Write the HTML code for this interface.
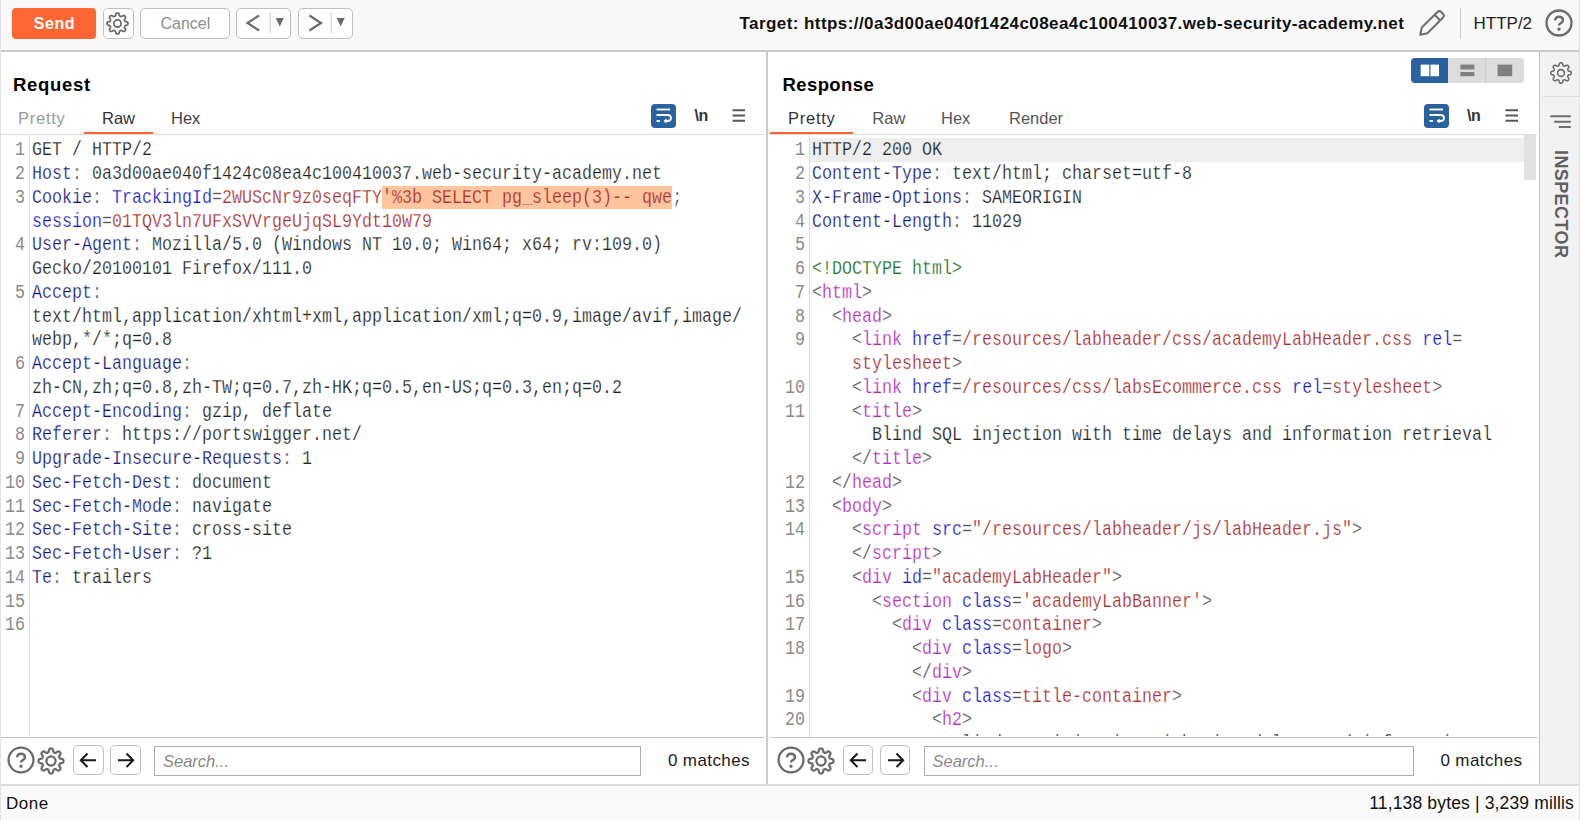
<!DOCTYPE html>
<html><head><meta charset="utf-8"><style>
*{margin:0;padding:0;box-sizing:border-box}
html,body{width:1580px;height:820px;overflow:hidden;background:#fff;font-family:"Liberation Sans",sans-serif;color:#1a1a1a}
.abs{position:absolute}
.code{font-family:"Liberation Mono",monospace;font-size:20px;line-height:23.75px;white-space:pre;transform-origin:0 0;transform:scaleX(0.8333);color:#222;-webkit-text-stroke:0.25px #fff}
.ln{font-family:"Liberation Mono",monospace;font-size:20px;line-height:23.75px;white-space:pre;color:#8a8a8a;text-align:right;transform-origin:100% 0;transform:scaleX(0.8333)}
.k{color:#16167e}
.a{color:#1515c8}
.v{color:#a82c2c}
.g{color:#555555}
.t{color:#b428c0}
.dt{color:#1a6e1a}
.hl{background:#ffc59f;-webkit-text-stroke:0.25px #ffc59f}
.l1{-webkit-text-stroke:0.25px #eeeeee}
</style></head><body>
<div class="abs" style="left:0px;top:0px;width:1580px;height:50px;background:#f9f9f9;"></div>
<div class="abs" style="left:0px;top:50px;width:1580px;height:2px;background:#cdc9c9;"></div>
<div class="abs" style="left:0px;top:784px;width:1580px;height:2px;background:#dcdcdc;"></div>
<div class="abs" style="left:0px;top:786px;width:1580px;height:34px;background:#fafafa;"></div>
<div class="abs" style="left:766px;top:52px;width:2px;height:732px;background:#cdc9c9;"></div>
<div class="abs" style="left:1540px;top:52px;width:39px;height:732px;background:#f3f2f2;"></div>
<div class="abs" style="left:1539px;top:52px;width:1px;height:732px;background:#c6c2c2;"></div>
<div class="abs" style="left:12px;top:8px;width:84px;height:31px;background:#ff6633;border-radius:4px"></div>
<div class="abs" style="left:33.8px;top:15.76px;font-size:16px;line-height:16px;color:#fff;font-weight:bold;font-style:normal;white-space:pre;letter-spacing:0.55px">Send</div>
<div class="abs" style="left:103px;top:8px;width:31px;height:31px;border:1px solid #c2bebe;border-radius:5px;background:#fff;"></div>
<svg class="abs" style="left:102.3px;top:7.55px" width="31" height="31" viewBox="0 0 31 31"><path d="M15.50,5.05 L15.77,5.06 L16.05,5.09 L16.31,5.16 L16.57,5.28 L16.82,5.48 L17.03,5.82 L17.20,6.32 L17.33,6.88 L17.45,7.38 L17.58,7.73 L17.74,7.95 L17.90,8.10 L18.08,8.21 L18.26,8.31 L18.45,8.39 L18.63,8.46 L18.83,8.52 L19.03,8.57 L19.26,8.58 L19.52,8.53 L19.86,8.38 L20.30,8.11 L20.79,7.80 L21.26,7.57 L21.65,7.48 L21.97,7.51 L22.24,7.61 L22.47,7.76 L22.69,7.92 L22.89,8.11 L23.08,8.31 L23.24,8.53 L23.39,8.76 L23.49,9.03 L23.52,9.35 L23.43,9.74 L23.20,10.21 L22.89,10.70 L22.62,11.14 L22.47,11.48 L22.42,11.74 L22.43,11.97 L22.48,12.17 L22.54,12.37 L22.61,12.55 L22.69,12.74 L22.79,12.92 L22.90,13.10 L23.05,13.26 L23.27,13.42 L23.62,13.55 L24.12,13.67 L24.68,13.80 L25.18,13.97 L25.52,14.18 L25.72,14.43 L25.84,14.69 L25.91,14.95 L25.94,15.23 L25.95,15.50 L25.94,15.77 L25.91,16.05 L25.84,16.31 L25.72,16.57 L25.52,16.82 L25.18,17.03 L24.68,17.20 L24.12,17.33 L23.62,17.45 L23.27,17.58 L23.05,17.74 L22.90,17.90 L22.79,18.08 L22.69,18.26 L22.61,18.45 L22.54,18.63 L22.48,18.83 L22.43,19.03 L22.42,19.26 L22.47,19.52 L22.62,19.86 L22.89,20.30 L23.20,20.79 L23.43,21.26 L23.52,21.65 L23.49,21.97 L23.39,22.24 L23.24,22.47 L23.08,22.69 L22.89,22.89 L22.69,23.08 L22.47,23.24 L22.24,23.39 L21.97,23.49 L21.65,23.52 L21.26,23.43 L20.79,23.20 L20.30,22.89 L19.86,22.62 L19.52,22.47 L19.26,22.42 L19.03,22.43 L18.83,22.48 L18.63,22.54 L18.45,22.61 L18.26,22.69 L18.08,22.79 L17.90,22.90 L17.74,23.05 L17.58,23.27 L17.45,23.62 L17.33,24.12 L17.20,24.68 L17.03,25.18 L16.82,25.52 L16.57,25.72 L16.31,25.84 L16.05,25.91 L15.77,25.94 L15.50,25.95 L15.23,25.94 L14.95,25.91 L14.69,25.84 L14.43,25.72 L14.18,25.52 L13.97,25.18 L13.80,24.68 L13.67,24.12 L13.55,23.62 L13.42,23.27 L13.26,23.05 L13.10,22.90 L12.92,22.79 L12.74,22.69 L12.55,22.61 L12.37,22.54 L12.17,22.48 L11.97,22.43 L11.74,22.42 L11.48,22.47 L11.14,22.62 L10.70,22.89 L10.21,23.20 L9.74,23.43 L9.35,23.52 L9.03,23.49 L8.76,23.39 L8.53,23.24 L8.31,23.08 L8.11,22.89 L7.92,22.69 L7.76,22.47 L7.61,22.24 L7.51,21.97 L7.48,21.65 L7.57,21.26 L7.80,20.79 L8.11,20.30 L8.38,19.86 L8.53,19.52 L8.58,19.26 L8.57,19.03 L8.52,18.83 L8.46,18.63 L8.39,18.45 L8.31,18.26 L8.21,18.08 L8.10,17.90 L7.95,17.74 L7.73,17.58 L7.38,17.45 L6.88,17.33 L6.32,17.20 L5.82,17.03 L5.48,16.82 L5.28,16.57 L5.16,16.31 L5.09,16.05 L5.06,15.77 L5.05,15.50 L5.06,15.23 L5.09,14.95 L5.16,14.69 L5.28,14.43 L5.48,14.18 L5.82,13.97 L6.32,13.80 L6.88,13.67 L7.38,13.55 L7.73,13.42 L7.95,13.26 L8.10,13.10 L8.21,12.92 L8.31,12.74 L8.39,12.55 L8.46,12.37 L8.52,12.17 L8.57,11.97 L8.58,11.74 L8.53,11.48 L8.38,11.14 L8.11,10.70 L7.80,10.21 L7.57,9.74 L7.48,9.35 L7.51,9.03 L7.61,8.76 L7.76,8.53 L7.92,8.31 L8.11,8.11 L8.31,7.92 L8.53,7.76 L8.76,7.61 L9.03,7.51 L9.35,7.48 L9.74,7.57 L10.21,7.80 L10.70,8.11 L11.14,8.38 L11.48,8.53 L11.74,8.58 L11.97,8.57 L12.17,8.52 L12.37,8.46 L12.55,8.39 L12.74,8.31 L12.92,8.21 L13.10,8.10 L13.26,7.95 L13.42,7.73 L13.55,7.38 L13.67,6.88 L13.80,6.32 L13.97,5.82 L14.18,5.48 L14.43,5.28 L14.69,5.16 L14.95,5.09 L15.23,5.06Z" fill="none" stroke="#666" stroke-width="1.7" stroke-linejoin="round"/><circle cx="15.5" cy="15.5" r="3.6" fill="none" stroke="#666" stroke-width="1.7"/></svg>
<div class="abs" style="left:140px;top:8px;width:90px;height:31px;border:1px solid #c2bebe;border-radius:5px;background:#fff;"></div>
<div class="abs" style="left:160.5px;top:16.06px;font-size:16px;line-height:16px;color:#8e8e8e;font-weight:normal;font-style:normal;white-space:pre;">Cancel</div>
<div class="abs" style="left:236px;top:8px;width:55px;height:31px;border:1px solid #c2bebe;border-radius:5px;background:#fff;"></div>
<div class="abs" style="left:298px;top:8px;width:55px;height:31px;border:1px solid #c2bebe;border-radius:5px;background:#fff;"></div>
<svg class="abs" style="left:236px;top:8px" width="55" height="31" viewBox="0 0 55 31"><path d="M23,7.5 L11.5,15 L23,22.5" fill="none" stroke="#6a6a6a" stroke-width="2.2"/><rect x="33.6" y="5" width="1.4" height="20" fill="#d6d6d6"/><path d="M39.8,10 L47.8,10 L43.8,18.5Z" fill="#6a6a6a"/></svg>
<svg class="abs" style="left:298px;top:8px" width="55" height="31" viewBox="0 0 55 31"><path d="M11.5,7.5 L23,15 L11.5,22.5" fill="none" stroke="#6a6a6a" stroke-width="2.2"/><rect x="32.5" y="5" width="1.4" height="20" fill="#d6d6d6"/><path d="M38.7,10 L46.7,10 L42.7,18.5Z" fill="#6a6a6a"/></svg>
<div class="abs" style="left:739.5px;top:14.61px;font-size:17px;line-height:17px;color:#111;font-weight:bold;font-style:normal;white-space:pre;letter-spacing:0.43px">Target: https://0a3d00ae040f1424c08ea4c100410037.web-security-academy.net</div>
<svg class="abs" style="left:1419px;top:9px" width="27" height="27" viewBox="0 0 27 27"><path d="M1.2,25.8 L2.8,18.6 L18.2,3.2 Q20.4,1 22.6,3.2 L23.8,4.4 Q26,6.6 23.8,8.8 L8.4,24.2 Z M15.6,5.8 L21.2,11.4" fill="none" stroke="#6e6e6e" stroke-width="2.1" stroke-linejoin="round"/></svg>
<div class="abs" style="left:1460px;top:8px;width:1px;height:31px;background:#cfcfcf;"></div>
<div class="abs" style="left:1473.5px;top:14.61px;font-size:17px;line-height:17px;color:#222;font-weight:normal;font-style:normal;white-space:pre;">HTTP/2</div>
<svg class="abs" style="left:1544.8px;top:8.7px" width="28" height="28" viewBox="0 0 28 28"><circle cx="14.0" cy="14.0" r="12.5" fill="none" stroke="#6b6b6b" stroke-width="2.3"/><path d="M10.10,11.40 Q10.40,7.70 14.00,7.70 Q17.90,7.70 17.90,11.00 Q17.90,13.40 15.00,14.60 Q14.00,15.00 14.00,16.60" fill="none" stroke="#6b6b6b" stroke-width="2.4"/><rect x="12.5" y="18.8" width="3" height="3" rx="0.8" fill="#6b6b6b"/></svg>
<div class="abs" style="left:13px;top:75.94px;font-size:18.5px;line-height:18.5px;color:#000;font-weight:bold;font-style:normal;white-space:pre;letter-spacing:0.7px">Request</div>
<div class="abs" style="left:18px;top:110.33px;font-size:16.5px;line-height:16.5px;color:#9a9a9a;font-weight:normal;font-style:normal;white-space:pre;letter-spacing:0.75px">Pretty</div>
<div class="abs" style="left:102px;top:110.33px;font-size:16.5px;line-height:16.5px;color:#333;font-weight:normal;font-style:normal;white-space:pre;">Raw</div>
<div class="abs" style="left:171px;top:110.33px;font-size:16.5px;line-height:16.5px;color:#444;font-weight:normal;font-style:normal;white-space:pre;">Hex</div>
<div class="abs" style="left:83.6px;top:131.5px;width:69px;height:2.5px;background:#ff6633;"></div>
<div class="abs" style="left:1px;top:134px;width:763px;height:1px;background:#dcdcdc;"></div>
<div class="abs" style="left:782.5px;top:75.94px;font-size:18.5px;line-height:18.5px;color:#000;font-weight:bold;font-style:normal;white-space:pre;letter-spacing:0.4px">Response</div>
<div class="abs" style="left:788px;top:110.33px;font-size:16.5px;line-height:16.5px;color:#333;font-weight:normal;font-style:normal;white-space:pre;letter-spacing:0.75px">Pretty</div>
<div class="abs" style="left:872.3px;top:110.33px;font-size:16.5px;line-height:16.5px;color:#555;font-weight:normal;font-style:normal;white-space:pre;">Raw</div>
<div class="abs" style="left:941px;top:110.33px;font-size:16.5px;line-height:16.5px;color:#555;font-weight:normal;font-style:normal;white-space:pre;">Hex</div>
<div class="abs" style="left:1009px;top:110.33px;font-size:16.5px;line-height:16.5px;color:#555;font-weight:normal;font-style:normal;white-space:pre;">Render</div>
<div class="abs" style="left:770px;top:131.5px;width:83px;height:2.5px;background:#ff6633;"></div>
<div class="abs" style="left:770px;top:134px;width:767px;height:1px;background:#dcdcdc;"></div>
<svg class="abs" style="left:651px;top:104px" width="25" height="24" viewBox="0 0 25 24"><rect x="0" y="0" width="25" height="24" rx="4" fill="#2a62a0"/><path d="M5.5,5.5 H19" stroke="#fff" stroke-width="1.8"/><path d="M5.5,11 H16.5 Q20,11 20,14 Q20,17 16.5,17 H14" fill="none" stroke="#fff" stroke-width="1.8"/><path d="M5.5,17 H9" stroke="#fff" stroke-width="1.8"/><path d="M15.5,14.5 L12.5,17 L15.5,19.5Z" fill="#fff"/></svg>
<div class="abs" style="left:694.5px;top:107.96px;font-size:16px;line-height:16px;color:#333;font-weight:bold;font-style:normal;white-space:pre;letter-spacing:-0.5px">\n</div>
<svg class="abs" style="left:732px;top:109px" width="14" height="13" viewBox="0 0 14 13"><path d="M0.5,1.3 H13 M0.5,6.5 H13 M0.5,11.7 H13" stroke="#585858" stroke-width="2"/></svg>
<svg class="abs" style="left:1424px;top:104px" width="25" height="24" viewBox="0 0 25 24"><rect x="0" y="0" width="25" height="24" rx="4" fill="#2a62a0"/><path d="M5.5,5.5 H19" stroke="#fff" stroke-width="1.8"/><path d="M5.5,11 H16.5 Q20,11 20,14 Q20,17 16.5,17 H14" fill="none" stroke="#fff" stroke-width="1.8"/><path d="M5.5,17 H9" stroke="#fff" stroke-width="1.8"/><path d="M15.5,14.5 L12.5,17 L15.5,19.5Z" fill="#fff"/></svg>
<div class="abs" style="left:1467px;top:107.96px;font-size:16px;line-height:16px;color:#333;font-weight:bold;font-style:normal;white-space:pre;letter-spacing:-0.5px">\n</div>
<svg class="abs" style="left:1505px;top:109px" width="14" height="13" viewBox="0 0 14 13"><path d="M0.5,1.3 H13 M0.5,6.5 H13 M0.5,11.7 H13" stroke="#585858" stroke-width="2"/></svg>
<svg class="abs" style="left:1411px;top:58px" width="113" height="25" viewBox="0 0 113 25"><path d="M4,0 H37 V25 H4 Q0,25 0,21 V4 Q0,0 4,0Z" fill="#2a62a0"/><path d="M37,0 H109 Q113,0 113,4 V21 Q113,25 109,25 H37Z" fill="#dcdcdc"/><rect x="74" y="0" width="0.8" height="25" fill="#c8c8c8"/><rect x="9.7" y="6.6" width="8.6" height="11.6" fill="#fff"/><rect x="19.5" y="6.6" width="8.5" height="11.6" fill="#fff"/><rect x="49.4" y="6.6" width="14" height="4.9" fill="#808080"/><rect x="49.4" y="14" width="14" height="4.2" fill="#808080"/><rect x="86.6" y="6.6" width="14.6" height="11.6" fill="#808080"/></svg>
<svg class="abs" style="left:1548.5px;top:61.3px" width="24" height="24" viewBox="0 0 24 24"><path d="M12.00,1.80 L12.27,1.81 L12.53,1.84 L12.79,1.91 L13.05,2.02 L13.29,2.22 L13.50,2.56 L13.66,3.04 L13.79,3.60 L13.90,4.08 L14.03,4.43 L14.18,4.65 L14.34,4.80 L14.51,4.90 L14.69,4.99 L14.87,5.07 L15.05,5.14 L15.24,5.20 L15.44,5.25 L15.66,5.26 L15.92,5.21 L16.25,5.06 L16.68,4.80 L17.16,4.49 L17.62,4.27 L18.00,4.18 L18.31,4.20 L18.58,4.30 L18.81,4.44 L19.02,4.61 L19.21,4.79 L19.39,4.98 L19.56,5.19 L19.70,5.42 L19.80,5.69 L19.82,6.00 L19.73,6.38 L19.51,6.84 L19.20,7.32 L18.94,7.75 L18.79,8.08 L18.74,8.34 L18.75,8.56 L18.80,8.76 L18.86,8.95 L18.93,9.13 L19.01,9.31 L19.10,9.49 L19.20,9.66 L19.35,9.82 L19.57,9.97 L19.92,10.10 L20.40,10.21 L20.96,10.34 L21.44,10.50 L21.78,10.71 L21.98,10.95 L22.09,11.21 L22.16,11.47 L22.19,11.73 L22.20,12.00 L22.19,12.27 L22.16,12.53 L22.09,12.79 L21.98,13.05 L21.78,13.29 L21.44,13.50 L20.96,13.66 L20.40,13.79 L19.92,13.90 L19.57,14.03 L19.35,14.18 L19.20,14.34 L19.10,14.51 L19.01,14.69 L18.93,14.87 L18.86,15.05 L18.80,15.24 L18.75,15.44 L18.74,15.66 L18.79,15.92 L18.94,16.25 L19.20,16.68 L19.51,17.16 L19.73,17.62 L19.82,18.00 L19.80,18.31 L19.70,18.58 L19.56,18.81 L19.39,19.02 L19.21,19.21 L19.02,19.39 L18.81,19.56 L18.58,19.70 L18.31,19.80 L18.00,19.82 L17.62,19.73 L17.16,19.51 L16.68,19.20 L16.25,18.94 L15.92,18.79 L15.66,18.74 L15.44,18.75 L15.24,18.80 L15.05,18.86 L14.87,18.93 L14.69,19.01 L14.51,19.10 L14.34,19.20 L14.18,19.35 L14.03,19.57 L13.90,19.92 L13.79,20.40 L13.66,20.96 L13.50,21.44 L13.29,21.78 L13.05,21.98 L12.79,22.09 L12.53,22.16 L12.27,22.19 L12.00,22.20 L11.73,22.19 L11.47,22.16 L11.21,22.09 L10.95,21.98 L10.71,21.78 L10.50,21.44 L10.34,20.96 L10.21,20.40 L10.10,19.92 L9.97,19.57 L9.82,19.35 L9.66,19.20 L9.49,19.10 L9.31,19.01 L9.13,18.93 L8.95,18.86 L8.76,18.80 L8.56,18.75 L8.34,18.74 L8.08,18.79 L7.75,18.94 L7.32,19.20 L6.84,19.51 L6.38,19.73 L6.00,19.82 L5.69,19.80 L5.42,19.70 L5.19,19.56 L4.98,19.39 L4.79,19.21 L4.61,19.02 L4.44,18.81 L4.30,18.58 L4.20,18.31 L4.18,18.00 L4.27,17.62 L4.49,17.16 L4.80,16.68 L5.06,16.25 L5.21,15.92 L5.26,15.66 L5.25,15.44 L5.20,15.24 L5.14,15.05 L5.07,14.87 L4.99,14.69 L4.90,14.51 L4.80,14.34 L4.65,14.18 L4.43,14.03 L4.08,13.90 L3.60,13.79 L3.04,13.66 L2.56,13.50 L2.22,13.29 L2.02,13.05 L1.91,12.79 L1.84,12.53 L1.81,12.27 L1.80,12.00 L1.81,11.73 L1.84,11.47 L1.91,11.21 L2.02,10.95 L2.22,10.71 L2.56,10.50 L3.04,10.34 L3.60,10.21 L4.08,10.10 L4.43,9.97 L4.65,9.82 L4.80,9.66 L4.90,9.49 L4.99,9.31 L5.07,9.13 L5.14,8.95 L5.20,8.76 L5.25,8.56 L5.26,8.34 L5.21,8.08 L5.06,7.75 L4.80,7.32 L4.49,6.84 L4.27,6.38 L4.18,6.00 L4.20,5.69 L4.30,5.42 L4.44,5.19 L4.61,4.98 L4.79,4.79 L4.98,4.61 L5.19,4.44 L5.42,4.30 L5.69,4.20 L6.00,4.18 L6.38,4.27 L6.84,4.49 L7.32,4.80 L7.75,5.06 L8.08,5.21 L8.34,5.26 L8.56,5.25 L8.76,5.20 L8.95,5.14 L9.13,5.07 L9.31,4.99 L9.49,4.90 L9.66,4.80 L9.82,4.65 L9.97,4.43 L10.10,4.08 L10.21,3.60 L10.34,3.04 L10.50,2.56 L10.71,2.22 L10.95,2.02 L11.21,1.91 L11.47,1.84 L11.73,1.81Z" fill="none" stroke="#6e6e6e" stroke-width="1.6" stroke-linejoin="round"/><circle cx="12.0" cy="12.0" r="3.4" fill="none" stroke="#6e6e6e" stroke-width="1.6"/></svg>
<div class="abs" style="left:1543px;top:96px;width:36px;height:1px;background:#dcdcdc;"></div>
<svg class="abs" style="left:1550px;top:114px" width="22" height="15" viewBox="0 0 22 15"><path d="M1,2.3 H20 M5,7.8 H20 M9.5,13 H20" stroke="#6e6e6e" stroke-width="2" stroke-linecap="round"/></svg>
<div class="abs" style="left:1553px;top:150px;width:107px;height:15px;transform-origin:0 0;transform:translate(15px,0) rotate(90deg);font-weight:bold;font-size:18px;line-height:15px;color:#606060;letter-spacing:0.4px;white-space:pre">INSPECTOR</div>
<div class="abs" style="left:810px;top:138px;width:714px;height:23.5px;background:#eeeeee;"></div>
<div class="abs" style="left:1524px;top:135px;width:12px;height:45px;background:#e2e2e2;"></div>
<div class="abs" style="left:29px;top:135px;width:1px;height:602px;background:#dcdcdc;"></div>
<div class="abs" style="left:809px;top:135px;width:1px;height:602px;background:#dcdcdc;"></div>
<div class="abs code" style="left:32px;top:138.4px">GET / HTTP/2
<span class="k">Host</span><span class="g">:</span> 0a3d00ae040f1424c08ea4c100410037.web-security-academy.net
<span class="k">Cookie</span><span class="g">:</span> <span class="a">TrackingId</span><span class="g">=</span><span class="v">2WUScNr9z0seqFTY</span><span class="hl"><span class="v">&#x27;%3b SELECT pg_sleep(3)-- qwe</span></span><span class="g">;</span>
<span class="a">session</span><span class="g">=</span><span class="v">01TQV3ln7UFxSVVrgeUjqSL9Ydt10W79</span>
<span class="k">User-Agent</span><span class="g">:</span> Mozilla/5.0 (Windows NT 10.0; Win64; x64; rv:109.0)
Gecko/20100101 Firefox/111.0
<span class="k">Accept</span><span class="g">:</span>
text/html,application/xhtml+xml,application/xml;q=0.9,image/avif,image/
webp,*/*;q=0.8
<span class="k">Accept-Language</span><span class="g">:</span>
zh-CN,zh;q=0.8,zh-TW;q=0.7,zh-HK;q=0.5,en-US;q=0.3,en;q=0.2
<span class="k">Accept-Encoding</span><span class="g">:</span> gzip, deflate
<span class="k">Referer</span><span class="g">:</span> https://portswigger.net/
<span class="k">Upgrade-Insecure-Requests</span><span class="g">:</span> 1
<span class="k">Sec-Fetch-Dest</span><span class="g">:</span> document
<span class="k">Sec-Fetch-Mode</span><span class="g">:</span> navigate
<span class="k">Sec-Fetch-Site</span><span class="g">:</span> cross-site
<span class="k">Sec-Fetch-User</span><span class="g">:</span> ?1
<span class="k">Te</span><span class="g">:</span> trailers

</div>
<div class="abs ln" style="left:-35px;top:138.4px;width:60px">1
2
3

4

5


6

7
8
9
10
11
12
13
14
15
16</div>
<div class="abs" style="left:809px;top:135px;width:715px;height:601px;overflow:hidden">
<div class="abs code" style="left:3.3999999999999773px;top:3.4000000000000057px"><span class="l1">HTTP/2 200 OK</span>
<span class="k">Content-Type</span><span class="g">:</span> text/html; charset=utf-8
<span class="k">X-Frame-Options</span><span class="g">:</span> SAMEORIGIN
<span class="k">Content-Length</span><span class="g">:</span> 11029

<span class="dt">&lt;!DOCTYPE html&gt;</span>
<span class="g">&lt;</span><span class="t">html</span><span class="g">&gt;</span>
  <span class="g">&lt;</span><span class="t">head</span><span class="g">&gt;</span>
    <span class="g">&lt;</span><span class="t">link</span> <span class="a">href</span><span class="g">=</span><span class="v">/resources/labheader/css/academyLabHeader.css</span> <span class="a">rel</span><span class="g">=</span>
    <span class="v">stylesheet</span><span class="g">&gt;</span>
    <span class="g">&lt;</span><span class="t">link</span> <span class="a">href</span><span class="g">=</span><span class="v">/resources/css/labsEcommerce.css</span> <span class="a">rel</span><span class="g">=</span><span class="v">stylesheet</span><span class="g">&gt;</span>
    <span class="g">&lt;</span><span class="t">title</span><span class="g">&gt;</span>
      Blind SQL injection with time delays and information retrieval
    <span class="g">&lt;/</span><span class="t">title</span><span class="g">&gt;</span>
  <span class="g">&lt;/</span><span class="t">head</span><span class="g">&gt;</span>
  <span class="g">&lt;</span><span class="t">body</span><span class="g">&gt;</span>
    <span class="g">&lt;</span><span class="t">script</span> <span class="a">src</span><span class="g">=</span><span class="v">&quot;/resources/labheader/js/labHeader.js&quot;</span><span class="g">&gt;</span>
    <span class="g">&lt;/</span><span class="t">script</span><span class="g">&gt;</span>
    <span class="g">&lt;</span><span class="t">div</span> <span class="a">id</span><span class="g">=</span><span class="v">&quot;academyLabHeader&quot;</span><span class="g">&gt;</span>
      <span class="g">&lt;</span><span class="t">section</span> <span class="a">class</span><span class="g">=</span><span class="v">&#x27;academyLabBanner&#x27;</span><span class="g">&gt;</span>
        <span class="g">&lt;</span><span class="t">div</span> <span class="a">class</span><span class="g">=</span><span class="v">container</span><span class="g">&gt;</span>
          <span class="g">&lt;</span><span class="t">div</span> <span class="a">class</span><span class="g">=</span><span class="v">logo</span><span class="g">&gt;</span>
          <span class="g">&lt;/</span><span class="t">div</span><span class="g">&gt;</span>
          <span class="g">&lt;</span><span class="t">div</span> <span class="a">class</span><span class="g">=</span><span class="v">title-container</span><span class="g">&gt;</span>
            <span class="g">&lt;</span><span class="t">h2</span><span class="g">&gt;</span>
              Blind SQL injection with time delays and information retrieval</div>
</div>
<div class="abs" style="left:768px;top:135px;width:40px;height:602px;overflow:hidden">
<div class="abs ln" style="left:-23px;top:3.4000000000000057px;width:60px">1
2
3
4
5
6
7
8
9

10
11


12
13
14

15
16
17
18

19
20
</div>
</div>
<div class="abs" style="left:1px;top:737px;width:763px;height:1px;background:#c4c0c0;"></div>
<div class="abs" style="left:770px;top:737px;width:767px;height:1px;background:#c4c0c0;"></div>
<svg class="abs" style="left:7.25px;top:746.35px" width="28" height="28" viewBox="0 0 28 28"><circle cx="14.0" cy="14.0" r="12.45" fill="none" stroke="#6b6b6b" stroke-width="2.3"/><path d="M10.10,11.40 Q10.40,7.70 14.00,7.70 Q17.90,7.70 17.90,11.00 Q17.90,13.40 15.00,14.60 Q14.00,15.00 14.00,16.60" fill="none" stroke="#6b6b6b" stroke-width="2.4"/><rect x="12.5" y="18.8" width="3" height="3" rx="0.8" fill="#6b6b6b"/></svg>
<svg class="abs" style="left:36px;top:745.5px" width="30" height="30" viewBox="0 0 30 30"><path d="M15.00,2.50 L15.33,2.51 L15.65,2.55 L15.97,2.64 L16.28,2.78 L16.57,3.04 L16.83,3.48 L17.02,4.10 L17.17,4.81 L17.30,5.44 L17.44,5.88 L17.62,6.16 L17.81,6.35 L18.02,6.48 L18.23,6.59 L18.44,6.69 L18.66,6.77 L18.89,6.84 L19.13,6.89 L19.40,6.90 L19.72,6.82 L20.14,6.62 L20.67,6.27 L21.28,5.86 L21.86,5.56 L22.34,5.43 L22.73,5.45 L23.05,5.57 L23.34,5.74 L23.60,5.94 L23.84,6.16 L24.06,6.40 L24.26,6.66 L24.43,6.95 L24.55,7.27 L24.57,7.66 L24.44,8.14 L24.14,8.72 L23.73,9.33 L23.38,9.86 L23.18,10.28 L23.10,10.60 L23.11,10.87 L23.16,11.11 L23.23,11.34 L23.31,11.56 L23.41,11.77 L23.52,11.98 L23.65,12.19 L23.84,12.38 L24.12,12.56 L24.56,12.70 L25.19,12.83 L25.90,12.98 L26.52,13.17 L26.96,13.43 L27.22,13.72 L27.36,14.03 L27.45,14.35 L27.49,14.67 L27.50,15.00 L27.49,15.33 L27.45,15.65 L27.36,15.97 L27.22,16.28 L26.96,16.57 L26.52,16.83 L25.90,17.02 L25.19,17.17 L24.56,17.30 L24.12,17.44 L23.84,17.62 L23.65,17.81 L23.52,18.02 L23.41,18.23 L23.31,18.44 L23.23,18.66 L23.16,18.89 L23.11,19.13 L23.10,19.40 L23.18,19.72 L23.38,20.14 L23.73,20.67 L24.14,21.28 L24.44,21.86 L24.57,22.34 L24.55,22.73 L24.43,23.05 L24.26,23.34 L24.06,23.60 L23.84,23.84 L23.60,24.06 L23.34,24.26 L23.05,24.43 L22.73,24.55 L22.34,24.57 L21.86,24.44 L21.28,24.14 L20.67,23.73 L20.14,23.38 L19.72,23.18 L19.40,23.10 L19.13,23.11 L18.89,23.16 L18.66,23.23 L18.44,23.31 L18.23,23.41 L18.02,23.52 L17.81,23.65 L17.62,23.84 L17.44,24.12 L17.30,24.56 L17.17,25.19 L17.02,25.90 L16.83,26.52 L16.57,26.96 L16.28,27.22 L15.97,27.36 L15.65,27.45 L15.33,27.49 L15.00,27.50 L14.67,27.49 L14.35,27.45 L14.03,27.36 L13.72,27.22 L13.43,26.96 L13.17,26.52 L12.98,25.90 L12.83,25.19 L12.70,24.56 L12.56,24.12 L12.38,23.84 L12.19,23.65 L11.98,23.52 L11.77,23.41 L11.56,23.31 L11.34,23.23 L11.11,23.16 L10.87,23.11 L10.60,23.10 L10.28,23.18 L9.86,23.38 L9.33,23.73 L8.72,24.14 L8.14,24.44 L7.66,24.57 L7.27,24.55 L6.95,24.43 L6.66,24.26 L6.40,24.06 L6.16,23.84 L5.94,23.60 L5.74,23.34 L5.57,23.05 L5.45,22.73 L5.43,22.34 L5.56,21.86 L5.86,21.28 L6.27,20.67 L6.62,20.14 L6.82,19.72 L6.90,19.40 L6.89,19.13 L6.84,18.89 L6.77,18.66 L6.69,18.44 L6.59,18.23 L6.48,18.02 L6.35,17.81 L6.16,17.62 L5.88,17.44 L5.44,17.30 L4.81,17.17 L4.10,17.02 L3.48,16.83 L3.04,16.57 L2.78,16.28 L2.64,15.97 L2.55,15.65 L2.51,15.33 L2.50,15.00 L2.51,14.67 L2.55,14.35 L2.64,14.03 L2.78,13.72 L3.04,13.43 L3.48,13.17 L4.10,12.98 L4.81,12.83 L5.44,12.70 L5.88,12.56 L6.16,12.38 L6.35,12.19 L6.48,11.98 L6.59,11.77 L6.69,11.56 L6.77,11.34 L6.84,11.11 L6.89,10.87 L6.90,10.60 L6.82,10.28 L6.62,9.86 L6.27,9.33 L5.86,8.72 L5.56,8.14 L5.43,7.66 L5.45,7.27 L5.57,6.95 L5.74,6.66 L5.94,6.40 L6.16,6.16 L6.40,5.94 L6.66,5.74 L6.95,5.57 L7.27,5.45 L7.66,5.43 L8.14,5.56 L8.72,5.86 L9.33,6.27 L9.86,6.62 L10.28,6.82 L10.60,6.90 L10.87,6.89 L11.11,6.84 L11.34,6.77 L11.56,6.69 L11.77,6.59 L11.98,6.48 L12.19,6.35 L12.38,6.16 L12.56,5.88 L12.70,5.44 L12.83,4.81 L12.98,4.10 L13.17,3.48 L13.43,3.04 L13.72,2.78 L14.03,2.64 L14.35,2.55 L14.67,2.51Z" fill="none" stroke="#6a6a6a" stroke-width="2.2" stroke-linejoin="round"/><circle cx="15.0" cy="15.0" r="4.6" fill="none" stroke="#6a6a6a" stroke-width="2.2"/></svg>
<div class="abs" style="left:73px;top:744.5px;width:30.5px;height:30.5px;border:1px solid #c2bebe;border-radius:5px;background:#fff;"></div>
<div class="abs" style="left:110px;top:744.5px;width:30.5px;height:30.5px;border:1px solid #c2bebe;border-radius:5px;background:#fff;"></div>
<svg class="abs" style="left:73px;top:744.5px" width="31" height="31" viewBox="0 0 31 31"><path d="M8,15.3 H23 M14.5,8.5 L7.8,15.3 L14.5,22" fill="none" stroke="#1a1a1a" stroke-width="2"/></svg>
<svg class="abs" style="left:110px;top:744.5px" width="31" height="31" viewBox="0 0 31 31"><path d="M8,15.3 H23 M16.5,8.5 L23.2,15.3 L16.5,22" fill="none" stroke="#1a1a1a" stroke-width="2"/></svg>
<div class="abs" style="left:154px;top:745.5px;width:487px;height:30px;border:1.5px solid #b0acac;background:#fff"></div>
<div class="abs" style="left:163px;top:752.63px;font-size:16.5px;line-height:16.5px;color:#8a8a8a;font-weight:normal;font-style:italic;white-space:pre;">Search...</div>
<div class="abs" style="left:667.9px;top:752.31px;font-size:17px;line-height:17px;color:#1a1a1a;font-weight:normal;font-style:normal;white-space:pre;letter-spacing:0.4px">0 matches</div>
<svg class="abs" style="left:776.75px;top:746.35px" width="28" height="28" viewBox="0 0 28 28"><circle cx="14.0" cy="14.0" r="12.45" fill="none" stroke="#6b6b6b" stroke-width="2.3"/><path d="M10.10,11.40 Q10.40,7.70 14.00,7.70 Q17.90,7.70 17.90,11.00 Q17.90,13.40 15.00,14.60 Q14.00,15.00 14.00,16.60" fill="none" stroke="#6b6b6b" stroke-width="2.4"/><rect x="12.5" y="18.8" width="3" height="3" rx="0.8" fill="#6b6b6b"/></svg>
<svg class="abs" style="left:806.15px;top:745.5px" width="30" height="30" viewBox="0 0 30 30"><path d="M15.00,2.50 L15.33,2.51 L15.65,2.55 L15.97,2.64 L16.28,2.78 L16.57,3.04 L16.83,3.48 L17.02,4.10 L17.17,4.81 L17.30,5.44 L17.44,5.88 L17.62,6.16 L17.81,6.35 L18.02,6.48 L18.23,6.59 L18.44,6.69 L18.66,6.77 L18.89,6.84 L19.13,6.89 L19.40,6.90 L19.72,6.82 L20.14,6.62 L20.67,6.27 L21.28,5.86 L21.86,5.56 L22.34,5.43 L22.73,5.45 L23.05,5.57 L23.34,5.74 L23.60,5.94 L23.84,6.16 L24.06,6.40 L24.26,6.66 L24.43,6.95 L24.55,7.27 L24.57,7.66 L24.44,8.14 L24.14,8.72 L23.73,9.33 L23.38,9.86 L23.18,10.28 L23.10,10.60 L23.11,10.87 L23.16,11.11 L23.23,11.34 L23.31,11.56 L23.41,11.77 L23.52,11.98 L23.65,12.19 L23.84,12.38 L24.12,12.56 L24.56,12.70 L25.19,12.83 L25.90,12.98 L26.52,13.17 L26.96,13.43 L27.22,13.72 L27.36,14.03 L27.45,14.35 L27.49,14.67 L27.50,15.00 L27.49,15.33 L27.45,15.65 L27.36,15.97 L27.22,16.28 L26.96,16.57 L26.52,16.83 L25.90,17.02 L25.19,17.17 L24.56,17.30 L24.12,17.44 L23.84,17.62 L23.65,17.81 L23.52,18.02 L23.41,18.23 L23.31,18.44 L23.23,18.66 L23.16,18.89 L23.11,19.13 L23.10,19.40 L23.18,19.72 L23.38,20.14 L23.73,20.67 L24.14,21.28 L24.44,21.86 L24.57,22.34 L24.55,22.73 L24.43,23.05 L24.26,23.34 L24.06,23.60 L23.84,23.84 L23.60,24.06 L23.34,24.26 L23.05,24.43 L22.73,24.55 L22.34,24.57 L21.86,24.44 L21.28,24.14 L20.67,23.73 L20.14,23.38 L19.72,23.18 L19.40,23.10 L19.13,23.11 L18.89,23.16 L18.66,23.23 L18.44,23.31 L18.23,23.41 L18.02,23.52 L17.81,23.65 L17.62,23.84 L17.44,24.12 L17.30,24.56 L17.17,25.19 L17.02,25.90 L16.83,26.52 L16.57,26.96 L16.28,27.22 L15.97,27.36 L15.65,27.45 L15.33,27.49 L15.00,27.50 L14.67,27.49 L14.35,27.45 L14.03,27.36 L13.72,27.22 L13.43,26.96 L13.17,26.52 L12.98,25.90 L12.83,25.19 L12.70,24.56 L12.56,24.12 L12.38,23.84 L12.19,23.65 L11.98,23.52 L11.77,23.41 L11.56,23.31 L11.34,23.23 L11.11,23.16 L10.87,23.11 L10.60,23.10 L10.28,23.18 L9.86,23.38 L9.33,23.73 L8.72,24.14 L8.14,24.44 L7.66,24.57 L7.27,24.55 L6.95,24.43 L6.66,24.26 L6.40,24.06 L6.16,23.84 L5.94,23.60 L5.74,23.34 L5.57,23.05 L5.45,22.73 L5.43,22.34 L5.56,21.86 L5.86,21.28 L6.27,20.67 L6.62,20.14 L6.82,19.72 L6.90,19.40 L6.89,19.13 L6.84,18.89 L6.77,18.66 L6.69,18.44 L6.59,18.23 L6.48,18.02 L6.35,17.81 L6.16,17.62 L5.88,17.44 L5.44,17.30 L4.81,17.17 L4.10,17.02 L3.48,16.83 L3.04,16.57 L2.78,16.28 L2.64,15.97 L2.55,15.65 L2.51,15.33 L2.50,15.00 L2.51,14.67 L2.55,14.35 L2.64,14.03 L2.78,13.72 L3.04,13.43 L3.48,13.17 L4.10,12.98 L4.81,12.83 L5.44,12.70 L5.88,12.56 L6.16,12.38 L6.35,12.19 L6.48,11.98 L6.59,11.77 L6.69,11.56 L6.77,11.34 L6.84,11.11 L6.89,10.87 L6.90,10.60 L6.82,10.28 L6.62,9.86 L6.27,9.33 L5.86,8.72 L5.56,8.14 L5.43,7.66 L5.45,7.27 L5.57,6.95 L5.74,6.66 L5.94,6.40 L6.16,6.16 L6.40,5.94 L6.66,5.74 L6.95,5.57 L7.27,5.45 L7.66,5.43 L8.14,5.56 L8.72,5.86 L9.33,6.27 L9.86,6.62 L10.28,6.82 L10.60,6.90 L10.87,6.89 L11.11,6.84 L11.34,6.77 L11.56,6.69 L11.77,6.59 L11.98,6.48 L12.19,6.35 L12.38,6.16 L12.56,5.88 L12.70,5.44 L12.83,4.81 L12.98,4.10 L13.17,3.48 L13.43,3.04 L13.72,2.78 L14.03,2.64 L14.35,2.55 L14.67,2.51Z" fill="none" stroke="#6a6a6a" stroke-width="2.2" stroke-linejoin="round"/><circle cx="15.0" cy="15.0" r="4.6" fill="none" stroke="#6a6a6a" stroke-width="2.2"/></svg>
<div class="abs" style="left:842.5px;top:744.5px;width:30.5px;height:30.5px;border:1px solid #c2bebe;border-radius:5px;background:#fff;"></div>
<div class="abs" style="left:879.5px;top:744.5px;width:30.5px;height:30.5px;border:1px solid #c2bebe;border-radius:5px;background:#fff;"></div>
<svg class="abs" style="left:842.5px;top:744.5px" width="31" height="31" viewBox="0 0 31 31"><path d="M8,15.3 H23 M14.5,8.5 L7.8,15.3 L14.5,22" fill="none" stroke="#1a1a1a" stroke-width="2"/></svg>
<svg class="abs" style="left:879.5px;top:744.5px" width="31" height="31" viewBox="0 0 31 31"><path d="M8,15.3 H23 M16.5,8.5 L23.2,15.3 L16.5,22" fill="none" stroke="#1a1a1a" stroke-width="2"/></svg>
<div class="abs" style="left:923.5px;top:745.5px;width:490.5px;height:30px;border:1.5px solid #b0acac;background:#fff"></div>
<div class="abs" style="left:932.5px;top:752.63px;font-size:16.5px;line-height:16.5px;color:#8a8a8a;font-weight:normal;font-style:italic;white-space:pre;">Search...</div>
<div class="abs" style="left:1440.4px;top:752.31px;font-size:17px;line-height:17px;color:#1a1a1a;font-weight:normal;font-style:normal;white-space:pre;letter-spacing:0.4px">0 matches</div>
<div class="abs" style="left:6px;top:794.61px;font-size:17px;line-height:17px;color:#111;font-weight:normal;font-style:normal;white-space:pre;letter-spacing:0.5px">Done</div>
<div class="abs" style="left:1174px;top:794.9px;width:400px;text-align:right;font-size:17.5px;line-height:17px;color:#111;white-space:pre;letter-spacing:0.15px">11,138 bytes | 3,239 millis</div>
<div class="abs" style="left:0px;top:0px;width:1px;height:820px;background:#e2e2e2;"></div>
<div class="abs" style="left:1579px;top:0px;width:1px;height:820px;background:#e0e0e0;"></div>
</body></html>
